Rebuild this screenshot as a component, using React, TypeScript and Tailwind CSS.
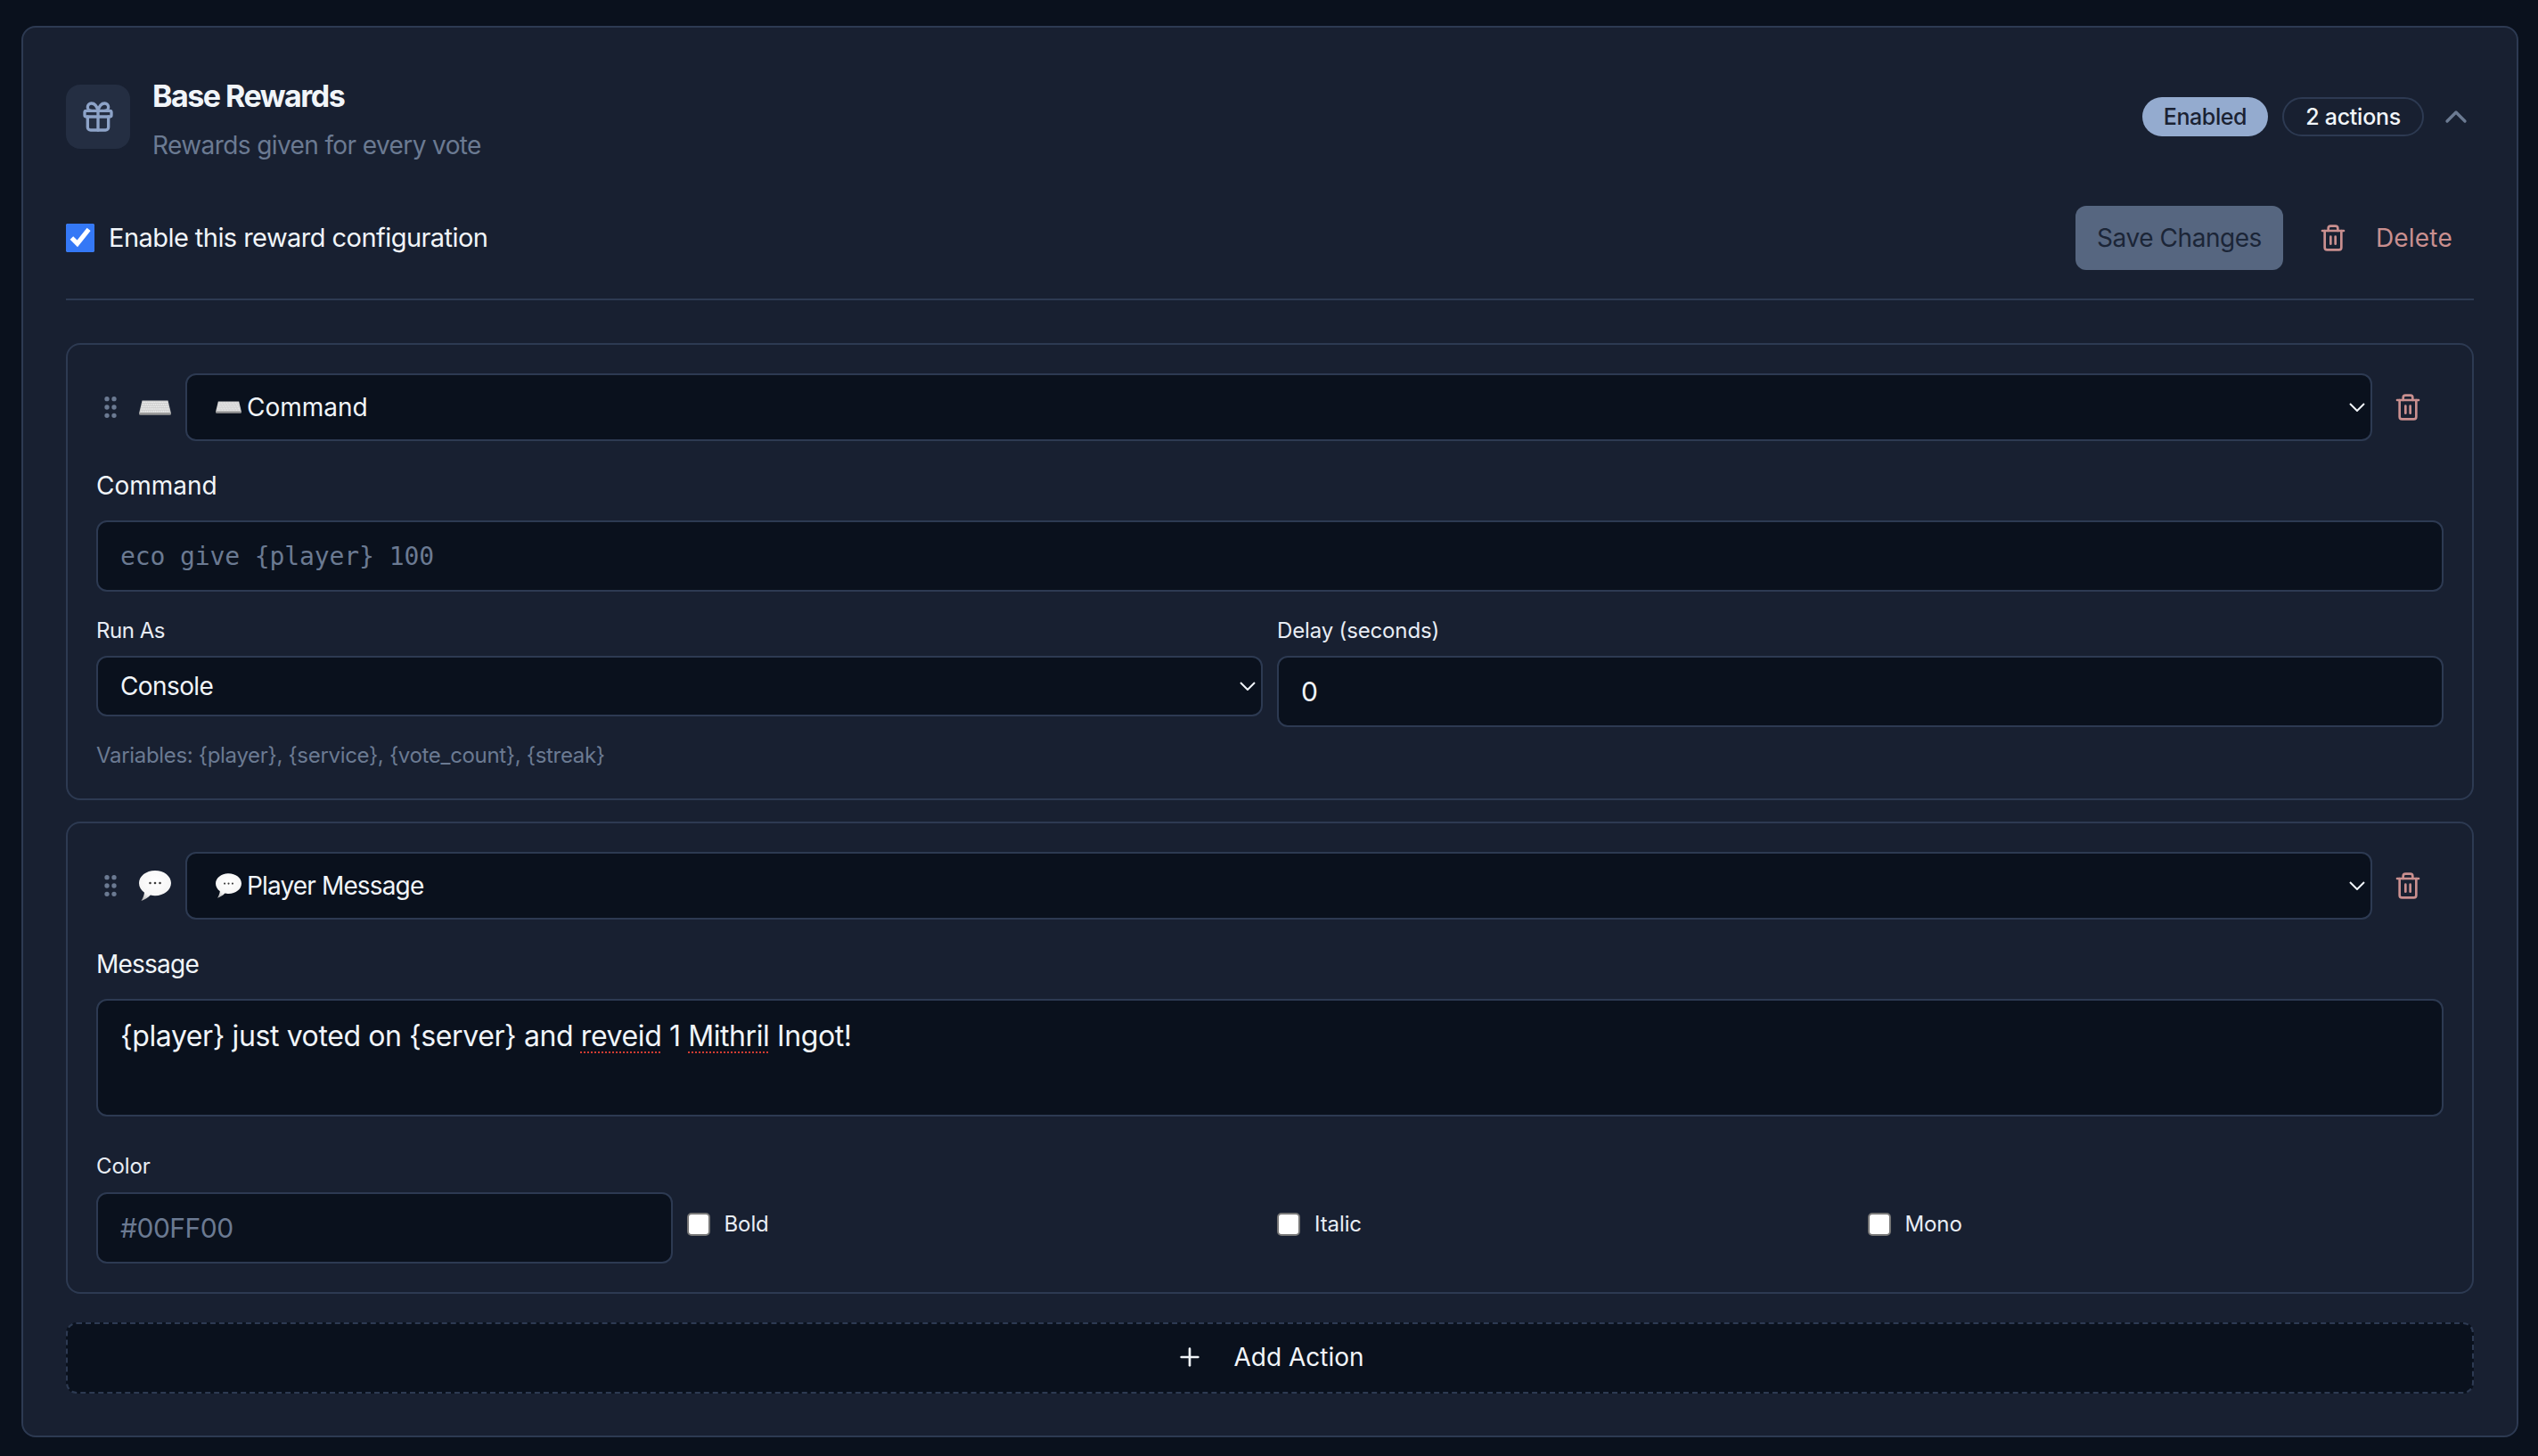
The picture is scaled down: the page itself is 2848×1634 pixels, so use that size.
import { ChevronUp, Gift, GripVertical, Plus, Trash2 } from 'lucide-react';

function KeyboardEmoji({ className }: { className: string }) {
  return (
    <svg viewBox="0 0 36 17" className={className}>
      <path d="M3.500 0.500h29L36 15q0 1.500-1.500 1.500h-33Q0 16.500 0 15z" fill="#c9c9c9" />
      <path d="M0 14.500h36v0.700q0 1.300-1.500 1.300h-33Q0 16.500 0 15.200z" fill="#8e8e8e" />
      <g stroke="#f1f1f1" strokeWidth="1.500" strokeDasharray="1.300 0.500">
        <path d="M4 2.500h28" />
        <path d="M3.400 5h29.200" />
        <path d="M2.800 7.500h30.400" />
        <path d="M2.200 10h31.600" />
        <path d="M1.600 12.500h32.800" />
      </g>
    </svg>
  );
}

function BubbleEmoji({ className }: { className: string }) {
  return (
    <svg viewBox="0 0 36 34" className={className}>
      <defs>
        <radialGradient id="bubble-fill" cx="50%" cy="35%" r="70%">
          <stop offset="0%" stopColor="#ffffff" />
          <stop offset="70%" stopColor="#f6f6f6" />
          <stop offset="100%" stopColor="#b9b9b9" />
        </radialGradient>
      </defs>
      <path
        d="M18 0C8 0 0 6.300 0 14c0 4.400 2.300 8.100 6 10.700-.4 3.200-1.600 6.500-3.500 9.300 4-1.200 7.800-3.500 10.300-6.400 1.700.4 3.400.6 5.200.6 10 0 18-6.400 18-14.200S28 0 18 0z"
        fill="url(#bubble-fill)"
      />
      <circle cx="12.500" cy="14" r="1.300" fill="#3c3c3c" />
      <circle cx="18" cy="14" r="1.300" fill="#3c3c3c" />
      <circle cx="23.500" cy="14" r="1.300" fill="#3c3c3c" />
    </svg>
  );
}

function SelectChevron({ className }: { className: string }) {
  return (
    <svg viewBox="0 0 18 10" fill="none" stroke="#f1f5f9" strokeWidth="2" className={className}>
      <path d="M1 1l8 8 8-8" />
    </svg>
  );
}

function ActionHeader({
  icon,
  inner,
  label,
  labelClass,
}: {
  icon: React.ReactNode;
  inner: React.ReactNode;
  label: string;
  labelClass: string;
}) {
  return (
    <div className="flex items-center">
      <GripVertical size={32} className="shrink-0 text-[#6b7a92]" />
      <div className="ml-4 flex w-9 shrink-0 justify-center">{icon}</div>
      <div className="ml-4 flex h-[76px] flex-1 items-center rounded-xl border-2 border-[#2d3a52] bg-[#0a111d] pl-8 pr-[6px]">
        {inner}
        <span className={labelClass}>{label}</span>
        <SelectChevron className="ml-auto h-[10px] w-[18px]" />
      </div>
      <Trash2 size={32} className="ml-6 mr-[24px] shrink-0 text-[#c98f8f]" />
    </div>
  );
}

function StyleCheck({ label }: { label: string }) {
  return (
    <label className="flex h-8 items-center gap-4 text-[24px] tracking-[-0.1px] text-[#e8edf5]">
      <input
        type="checkbox"
        className="m-0 h-[26px] w-[26px] appearance-none rounded-[5px] border-2 border-[#767676] bg-white"
      />
      {label}
    </label>
  );
}

export default function App() {
  return (
    <div className="h-[1634px] overflow-hidden bg-[#0a111d] pl-6 pr-[22px] pt-[29px] font-['Inter',sans-serif]">
      <div className="rounded-2xl border-2 border-[#2d3a52] bg-[#182031] px-12 pb-[47px] pt-16">
        {/* Header */}
        <div className="flex h-[72px] items-start justify-between">
          <div className="flex items-start gap-7">
            <div className="flex h-[72px] w-[72px] items-center justify-center rounded-2xl bg-[#242e42]">
              <Gift size={40} className="text-[#8da3c8]" />
            </div>
            <div className="-mt-[9px] -ml-[3px]">
              <h2 className="text-[34px] font-bold leading-[44px] tracking-[-1.5px] text-[#f1f5f9]">Base Rewards</h2>
              <p className="mt-[15px] text-[28px] leading-[36px] tracking-[-0.6px] text-[#6b7a92]">
                Rewards given for every vote
              </p>
            </div>
          </div>
          <div className="flex items-center gap-4 pt-[14px]">
            <span className="flex h-11 items-center rounded-full bg-[#94abcf] px-6 pt-[1px] text-[25px] font-medium tracking-[-0.4px] text-[#1a2233]">
              Enabled
            </span>
            <span className="flex h-11 items-center rounded-full border-2 border-[#2d3a52] px-6 pt-[1px] text-[25px] font-medium tracking-[-0.25px] text-[#f1f5f9]">
              2 actions
            </span>
            <ChevronUp size={40} className="text-[#6b7a92]" />
          </div>
        </div>

        {/* Enable row */}
        <div className="mt-16 flex items-center justify-between">
          <label className="flex items-center gap-4 text-[29px] tracking-[-0.55px] text-[#f1f5f9]">
            <input type="checkbox" defaultChecked className="m-0 h-8 w-8 accent-[#3478f6]" />
            Enable this reward configuration
          </label>
          <div className="flex items-center gap-4">
            <button className="flex h-[72px] items-center rounded-xl bg-[#566680] px-6 text-[28px] tracking-[-0.45px] text-[#1b2537]">
              Save Changes
            </button>
            <button className="flex h-[72px] items-center gap-8 px-6 text-[28px] tracking-[0.2px] text-[#c98f8f]">
              <Trash2 size={32} />
              Delete
            </button>
          </div>
        </div>

        <div className="mt-8 h-[2px] bg-[#2d3a52]" />

        {/* Command action */}
        <section className="mt-12 rounded-2xl border-2 border-[#2d3a52] px-8 py-8">
          <ActionHeader
            icon={<KeyboardEmoji className="h-[17px] w-9" />}
            inner={<KeyboardEmoji className="h-[14px] w-[29px]" />}
            label="Command"
            labelClass="ml-[6px] text-[28px] text-[#f1f5f9]"
          />
          <div className="mt-[30px] text-[28px] leading-10 text-[#f1f5f9]">Command</div>
          <input
            placeholder="eco give {player} 100"
            className="mt-[19px] h-20 w-full rounded-xl border-2 border-[#2d3a52] bg-[#0a111d] px-[25px] font-['DejaVu_Sans_Mono',monospace] text-[28px] tracking-[-0.1px] outline-none placeholder:text-[#6b7a92]"
          />
          <div className="mt-7 grid grid-cols-2 items-start gap-4">
            <div>
              <div className="text-[24px] leading-8 tracking-[-0.48px] text-[#e8edf5]">Run As</div>
              <div className="mt-3 flex h-[68px] items-center rounded-xl border-2 border-[#2d3a52] bg-[#0a111d] pl-[25px] pr-[6px] text-[28px] tracking-[-0.6px] text-[#f1f5f9]">
                Console
                <SelectChevron className="ml-auto h-[10px] w-[18px]" />
              </div>
            </div>
            <div>
              <div className="text-[24px] leading-8 tracking-[-0.15px] text-[#e8edf5]">Delay (seconds)</div>
              <input
                defaultValue="0"
                className="mt-3 h-20 w-full rounded-xl border-2 border-[#2d3a52] bg-[#0a111d] px-[25px] text-[30px] text-[#f1f5f9] outline-none"
              />
            </div>
          </div>
          <p className="mt-4 text-[24px] leading-8 tracking-[-0.32px] text-[#6b7a92]">
            Variables: {'{player}'}, {'{service}'}, {'{vote_count}'}, {'{streak}'}
          </p>
        </section>

        {/* Player message action */}
        <section className="mt-6 rounded-2xl border-2 border-[#2d3a52] px-8 py-8">
          <ActionHeader
            icon={<BubbleEmoji className="h-[34px] w-9" />}
            inner={<BubbleEmoji className="h-[28px] w-[29px]" />}
            label="Player Message"
            labelClass="ml-[6px] text-[28px] tracking-[-0.85px] text-[#f1f5f9]"
          />
          <div className="mt-[30px] text-[28px] leading-10 tracking-[-0.77px] text-[#f1f5f9]">Message</div>
          <div className="mt-[19px] h-[132px] rounded-xl border-2 border-[#2d3a52] bg-[#0a111d] px-[25px] pt-5 text-[32px] leading-10 tracking-[-0.4px] text-[#f1f5f9]">
            {'{player}'} just voted on {'{server}'} and{' '}
            <span className="underline decoration-[#d43c32] decoration-dotted decoration-2 underline-offset-[6px]">reveid</span> 1{' '}
            <span className="underline decoration-[#d43c32] decoration-dotted decoration-2 underline-offset-[6px]">Mithril</span> Ingot!
          </div>
          <div className="mt-10 grid grid-cols-4 items-end gap-4">
            <div>
              <div className="text-[24px] leading-8 tracking-[-0.1px] text-[#e8edf5]">Color</div>
              <input
                placeholder="#00FF00"
                className="mt-[13px] h-20 w-full rounded-xl border-2 border-[#2d3a52] bg-[#0a111d] px-[25px] text-[30px] tracking-[-0.5px] outline-none placeholder:text-[#6b7a92]"
              />
            </div>
            <div className="pb-7"><StyleCheck label="Bold" /></div>
            <div className="pb-7"><StyleCheck label="Italic" /></div>
            <div className="pb-7"><StyleCheck label="Mono" /></div>
          </div>
        </section>

        {/* Add action */}
        <button className="mt-8 flex h-20 w-full items-center justify-center gap-[33px] rounded-xl border-2 border-dashed border-[#2d3a52] bg-[#0a111d] pb-[2px] text-[28px] text-[#f1f5f9]">
          <Plus size={32} />
          Add Action
        </button>
      </div>
    </div>
  );
}
